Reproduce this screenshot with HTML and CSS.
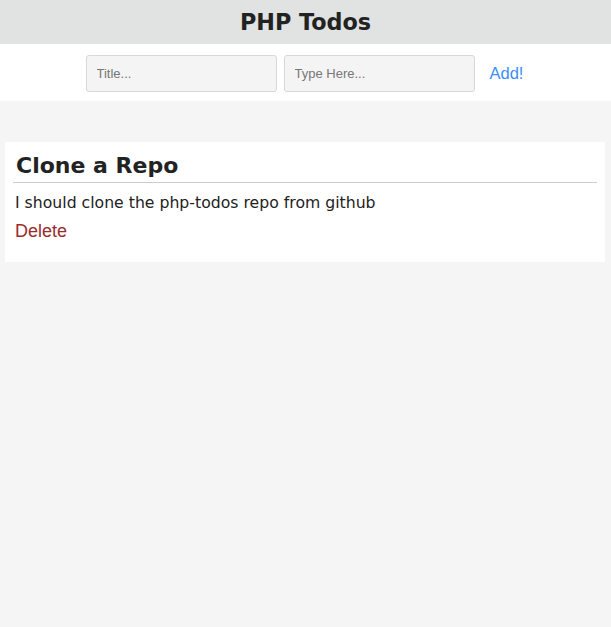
FILE: index.html
```html
<!DOCTYPE html>
<html>
<head>
<meta charset="utf-8">
<link rel="stylesheet" href="styles.css">
</head>
<body>
<header class="top">
  <h1 class="brand">PHP Todos</h1>
</header>
<form class="add-form">
  <input class="field" type="text" placeholder="Title...">
  <input class="field" type="text" placeholder="Type Here...">
  <button class="add-btn" type="button">Add!</button>
</form>
<main class="list">
  <section class="todo">
    <h2 class="todo-title">Clone a Repo</h2>
    <p class="todo-body">I should clone the php-todos repo from github</p>
    <a class="delete" href="#">Delete</a>
  </section>
</main>
</body>
</html>
```
FILE: styles.css
```css
html, body {
  margin: 0;
  padding: 0;
  background: #f5f5f5;
  font-family: "DejaVu Sans", sans-serif;
  color: #222;
}
.top {
  background: #e1e2e2;
  height: 44px;
  display: flex;
  align-items: center;
  justify-content: center;
}
.brand {
  margin: 0;
  font-size: 22.3px;
  font-weight: 700;
  color: #222;
}
.add-form {
  background: #fff;
  height: 57px;
  display: flex;
  align-items: center;
  justify-content: center;
  gap: 7px;
  padding-left: 6px;
  padding-top: 2px;
  box-sizing: border-box;
}
.field {
  box-sizing: border-box;
  width: 191px;
  height: 37px;
  background: #f4f4f4;
  border: 1px solid #d8d8d8;
  border-radius: 3px;
  padding: 0 10px;
  font-family: "Liberation Sans", Arial, sans-serif;
  font-size: 13px;
  color: #333;
}
.field::placeholder {
  color: #777;
}
.add-btn {
  background: none;
  border: none;
  color: #3a8ef6;
  font-family: "Liberation Sans", Arial, sans-serif;
  font-size: 16.5px;
  padding: 0 8px;
  margin-top: -1px;
}
.list {
  padding: 41px 6px 0 5px;
}
.todo {
  background: #fff;
  padding: 9px 8px 20px 8px;
}
.todo-title {
  margin: 0;
  padding: 0 0 1px 3px;
  border-bottom: 1px solid #cccccc;
  font-size: 22px;
  line-height: 30px;
  font-weight: 700;
  color: #222;
}
.todo-body {
  margin: 10px 0 9px 2px;
  font-size: 15.7px;
  color: #222;
}
.delete {
  display: inline-block;
  margin-left: 2px;
  color: #9b2b2b;
  text-decoration: none;
  font-family: "Liberation Sans", Arial, sans-serif;
  font-size: 18px;
}
```
